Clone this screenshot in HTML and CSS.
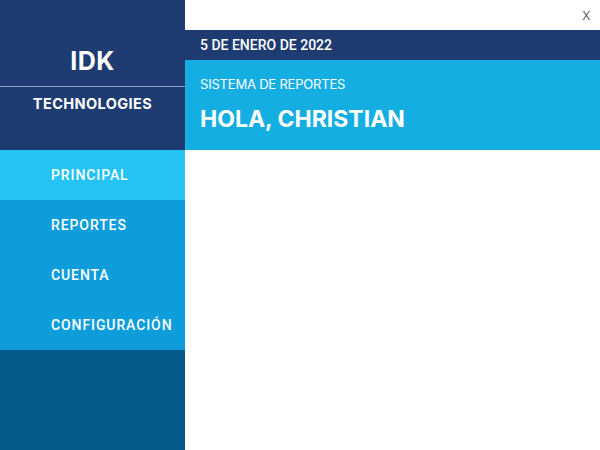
FILE: index.html
```html
<!DOCTYPE html>
<html lang="es">
<head>
<meta charset="utf-8">
<link rel="stylesheet" href="styles.css">
</head>
<body>
<div class="app">
  <aside class="sidebar">
    <div class="brand">
      <div class="brand-top">IDK</div>
      <div class="brand-bottom">TECHNOLOGIES</div>
    </div>
    <nav class="menu">
      <div class="menu-item active">PRINCIPAL</div>
      <div class="menu-item">REPORTES</div>
      <div class="menu-item">CUENTA</div>
      <div class="menu-item">CONFIGURACIÓN</div>
    </nav>
    <div class="sidebar-fill"></div>
  </aside>
  <main class="main">
    <div class="titlebar"><span class="close">X</span></div>
    <div class="datebar">5 DE ENERO DE 2022</div>
    <div class="hero">
      <div class="hero-sub">SISTEMA DE REPORTES</div>
      <div class="hero-title">HOLA, CHRISTIAN</div>
    </div>
    <div class="content"></div>
  </main>
</div>
</body>
</html>
```
FILE: styles.css
```css
* { box-sizing: border-box; }
html, body { margin: 0; padding: 0; }
body {
  width: 600px;
  height: 450px;
  overflow: hidden;
  background: #ffffff;
  font-family: Roboto, "Liberation Sans", sans-serif;
}
.app {
  display: flex;
  width: 600px;
  height: 450px;
}
.sidebar {
  width: 185px;
  display: flex;
  flex-direction: column;
  flex-shrink: 0;
}
.brand {
  height: 150px;
  background: #1e3c72;
  color: #ffffff;
  display: flex;
  flex-direction: column;
  font-family: Inter, "Open Sans", sans-serif;
  font-weight: 700;
}
.brand-top {
  height: 87px;
  border-bottom: 1px solid #8fa0c2;
  display: flex;
  align-items: center;
  justify-content: center;
  font-size: 25px;
  letter-spacing: 0.5px;
  padding-top: 50px;
  padding-bottom: 14px;
}
.brand-bottom {
  text-align: center;
  font-size: 14.5px;
  letter-spacing: 0.4px;
  padding-top: 8px;
}
.menu {
  display: flex;
  flex-direction: column;
}
.menu-item {
  height: 50px;
  background: #0e9ddb;
  color: #ffffff;
  font-size: 14px;
  font-weight: 500;
  letter-spacing: 0.9px;
  padding-left: 51px;
  display: flex;
  align-items: center;
}
.menu-item.active {
  background: #24c3f4;
}
.sidebar-fill {
  flex: 1;
  background: #065a8c;
}
.main {
  flex: 1;
  display: flex;
  flex-direction: column;
}
.titlebar {
  height: 30px;
  display: flex;
  justify-content: flex-end;
  align-items: center;
  padding-right: 10px;
}
.close {
  color: #555555;
  font-size: 13px;
  font-family: "Open Sans", sans-serif;
}
.datebar {
  height: 30px;
  background: #1e3c72;
  color: #ffffff;
  font-size: 14px;
  font-weight: 500;
  padding-left: 15px;
  display: flex;
  align-items: center;
}
.hero {
  height: 90px;
  background: #15aee3;
  color: #ffffff;
  padding: 16px 15px 0;
  font-family: Inter, "Open Sans", sans-serif;
}
.hero-sub {
  font-size: 13px;
  font-weight: 400;
  letter-spacing: -0.2px;
}
.hero-title {
  font-size: 23px;
  font-weight: 700;
  margin-top: 13px;
}
.content {
  flex: 1;
  background: #ffffff;
}
```
